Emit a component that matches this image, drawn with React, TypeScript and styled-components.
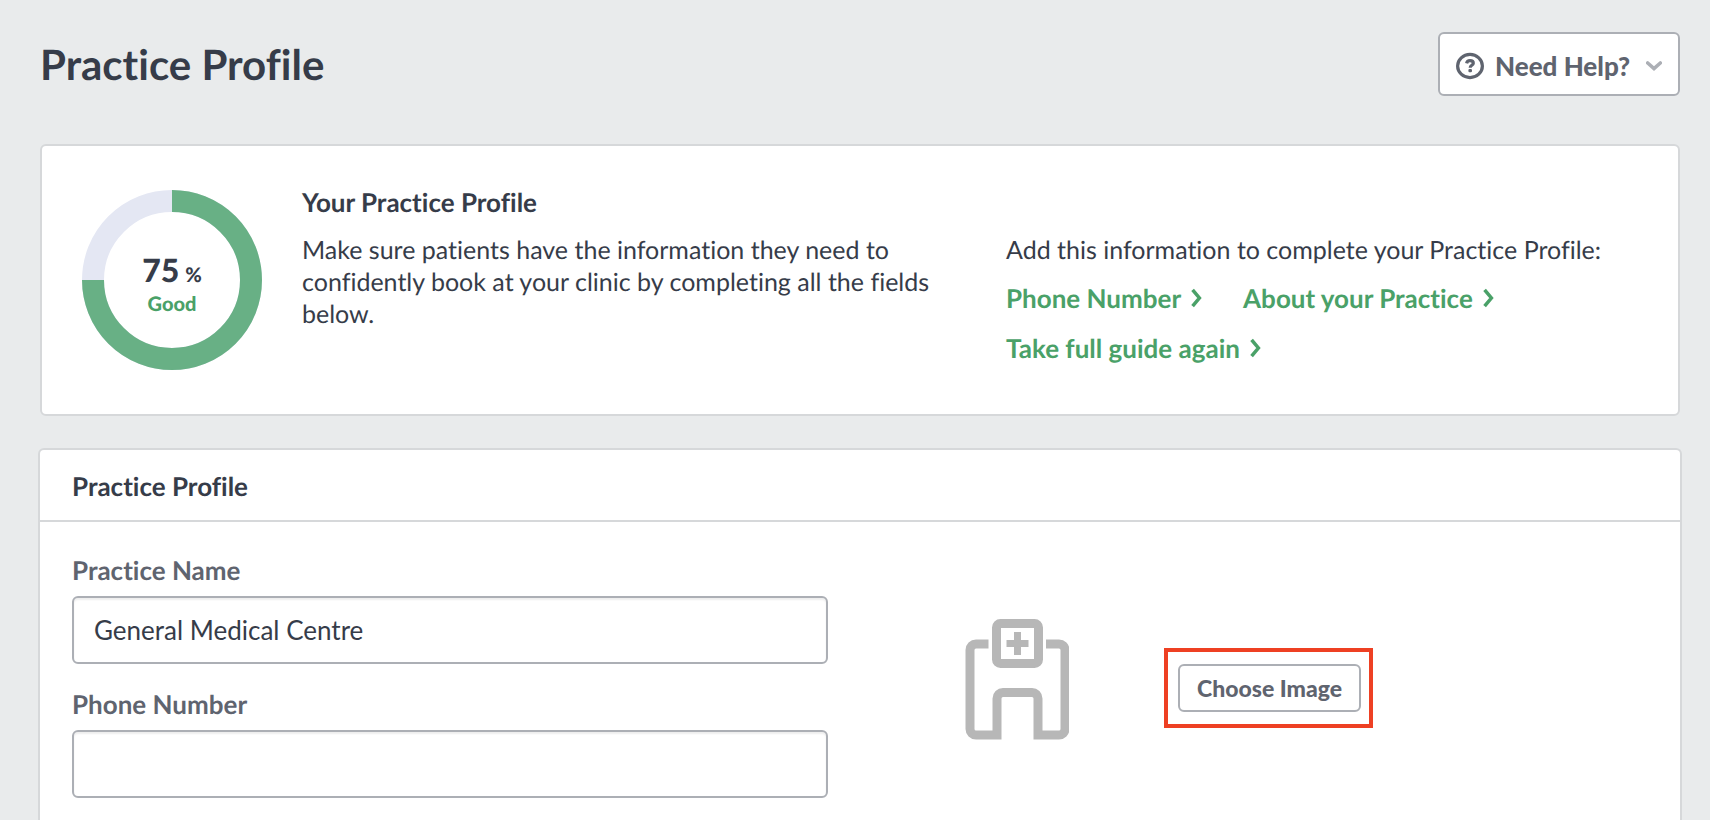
import React from "react";
import styled, { createGlobalStyle } from "styled-components";

const ink = "#363c49";
const slate = "#5f646f";
const green = "#4aa168";
const outline = "#acafb5";
const hairline = "#d6d8da";

const GlobalStyle = createGlobalStyle`
  *, *::before, *::after { box-sizing: border-box; }
  body {
    margin: 0;
    background: #e9ebec;
    color: ${ink};
    font-family: Lato, "Open Sans", sans-serif;
    font-size: 26px;
    line-height: 32px;
    font-variant-ligatures: none;
    text-rendering: geometricPrecision;
  }
  h1, h2, h3, p { margin: 0; }
  button, input { font: inherit; color: inherit; }
`;

const Page = styled.main`
  display: flex;
  flex-direction: column;
  min-height: 100vh;
  padding: 32px 30px 0 40px;
`;

const PageHeader = styled.header`
  display: flex;
  align-items: center;
  justify-content: space-between;
  height: 64px;
  margin-bottom: 48px;
`;

const PageTitle = styled.h1`
  font-size: 42px;
  line-height: 52px;
  font-weight: 700;
`;

const OutlineButton = styled.button<{ $small?: boolean }>`
  display: flex;
  align-items: center;
  justify-content: center;
  height: ${(p) => (p.$small ? "48px" : "64px")};
  padding: ${(p) => (p.$small ? "0 17px" : "3px 16px 0")};
  border: 2px solid ${outline};
  border-radius: 6px;
  background: #fff;
  color: ${slate};
  font-size: ${(p) => (p.$small ? "23px" : "26px")};
  font-weight: 900;
  white-space: nowrap;
  cursor: pointer;

  svg:first-child { margin-right: 11px; }
  svg:last-child { margin-left: 16px; }
`;

const Summary = styled.section`
  display: flex;
  gap: 40px;
  padding: 40px 32px 44px 40px;
  border: 2px solid ${hairline};
  border-radius: 6px;
  background: #fff;
`;

const Meter = styled.div`
  display: grid;
  flex: none;
  width: 180px;
  height: 180px;
  margin-top: 4px;

  > * { grid-area: 1 / 1; }
`;

const MeterText = styled.div`
  display: flex;
  flex-direction: column;
  align-items: center;
  justify-content: center;
  gap: 2px;
  padding-top: 14px;
`;

const Percent = styled.span`
  display: flex;
  align-items: baseline;
  gap: 6px;
  height: 32px;
  font-size: 32px;
  font-weight: 900;

  small { font-size: 20px; }
`;

const Rating = styled.span`
  color: ${green};
  font-size: 20px;
  font-weight: 900;
`;

const SummaryColumns = styled.div`
  display: grid;
  flex: 1;
  grid-template-columns: 1fr 1fr;
  gap: 16px 64px;
  align-content: start;
`;

const SectionTitle = styled.h2`
  font-size: 26px;
  line-height: 32px;
  font-weight: 700;
`;

const SummaryTitle = styled(SectionTitle)`
  grid-column: 1 / -1;
`;

const SummaryText = styled.p`
  font-size: 25px;
`;

const LinkList = styled.div`
  display: flex;
  flex-wrap: wrap;
  gap: 18px 40px;
  margin-top: 16px;
`;

const GuideLink = styled.a`
  display: inline-flex;
  align-items: center;
  gap: 9px;
  color: ${green};
  font-weight: 700;
  text-decoration: none;
`;

const Panel = styled.section`
  flex: 1;
  margin: 32px -2px 0;
  border: 2px solid ${hairline};
  border-bottom: 0;
  border-radius: 6px 6px 0 0;
  background: #fff;
`;

const PanelHeader = styled.header`
  padding: 20px 32px 18px;
  border-bottom: 2px solid ${hairline};
`;

const PanelBody = styled.div`
  display: grid;
  grid-template-columns: 1fr 1fr;
  gap: 64px;
  padding: 32px 32px 16px;
`;

const Fields = styled.form`
  display: flex;
  flex-direction: column;
  gap: 24px;
`;

const Field = styled.div`
  display: flex;
  flex-direction: column;
  gap: 10px;
`;

const Label = styled.label`
  color: ${slate};
  font-weight: 700;
`;

const TextInput = styled.input`
  width: 100%;
  height: 68px;
  padding: 0 20px;
  border: 2px solid ${outline};
  border-radius: 6px;
  background: #fff;
  box-shadow: inset 0 2px 2px rgba(0, 0, 0, 0.07);
  outline: none;
`;

const ImagePicker = styled.div`
  display: flex;
  align-items: flex-start;
  gap: 22px;
`;

const ImagePreview = styled.div`
  display: flex;
  align-items: center;
  justify-content: center;
  width: 250px;
  height: 250px;
`;

const Highlight = styled.div`
  margin-top: 94px;
  padding: 12px 8px 12px 10px;
  border: 4px solid #ee4023;
`;

const HelpIcon = () => (
  <svg width="28" height="28" viewBox="0 0 28 28" fill="none" aria-hidden="true">
    <ellipse cx="14" cy="14" rx="12.4" ry="11.6" stroke={slate} strokeWidth="3.2" />
    <path d="M10.6 11.4c.4-1.900 1.700-2.700 3.400-2.700 2 0 3.300 1 3.300 2.600 0 2-3.100 2.100-3.100 4.400" stroke={slate} strokeWidth="3.200" />
    <rect x="12.400" y="17" width="3.600" height="3.200" rx="1.200" fill={slate} />
  </svg>
);

const ChevronDown = () => (
  <svg width="16" height="10" viewBox="0 0 16 10" fill="none" aria-hidden="true">
    <path d="M1.700 2 8 7.500 14.300 2" stroke={outline} strokeWidth="3.600" strokeLinecap="round" />
  </svg>
);

const ChevronRight = () => (
  <svg width="13" height="20" viewBox="0 0 13 20" fill="none" aria-hidden="true">
    <path d="M2.600 1.800 9.400 10 2.600 18.200" stroke={green} strokeWidth="3.500" />
  </svg>
);

const Ring = ({ value }: { value: number }) => (
  <svg width="180" height="180" viewBox="0 0 180 180" fill="none" aria-hidden="true">
    <circle cx="90" cy="90" r="79" stroke="#e4e7f3" strokeWidth="22" />
    <circle
      cx="90"
      cy="90"
      r="79"
      stroke="#68b085"
      strokeWidth="22"
      pathLength="100"
      strokeDasharray={`${value} 100`}
      transform="rotate(-90 90 90)"
    />
  </svg>
);

const HospitalIcon = () => (
  <svg width="104" height="122" viewBox="0 0 104 122" fill="none" stroke="#b7b7b7" strokeWidth="9" role="img" aria-label="Practice image">
    <rect x="31.500" y="5.500" width="42" height="40" rx="4" />
    <path d="M52.500 14v23M41.500 25.500h22" strokeWidth="7" />
    <path d="M23.500 26H11a6 6 0 0 0-6 6v79a6 6 0 0 0 6 6H32V80.500a6 6 0 0 1 6-6h29a6 6 0 0 1 6 6V117H94a6 6 0 0 0 6-6V32a6 6 0 0 0-6-6H81" />
  </svg>
);

const links = ["Phone Number", "About your Practice", "Take full guide again"];

export default function App() {
  return (
    <>
      <GlobalStyle />
      <Page>
        <PageHeader>
          <PageTitle>Practice Profile</PageTitle>
          <OutlineButton type="button">
            <HelpIcon />
            Need Help?
            <ChevronDown />
          </OutlineButton>
        </PageHeader>

        <Summary>
          <Meter>
            <Ring value={75} />
            <MeterText>
              <Percent>
                75 <small>%</small>
              </Percent>
              <Rating>Good</Rating>
            </MeterText>
          </Meter>
          <SummaryColumns>
            <SummaryTitle>Your Practice Profile</SummaryTitle>
            <SummaryText>
              Make sure patients have the information they need to confidently book at your clinic by
              completing all the fields below.
            </SummaryText>
            <div>
              <SummaryText>Add this information to complete your Practice Profile:</SummaryText>
              <LinkList>
                {links.map((text) => (
                  <GuideLink key={text} href="#">
                    {text}
                    <ChevronRight />
                  </GuideLink>
                ))}
              </LinkList>
            </div>
          </SummaryColumns>
        </Summary>

        <Panel>
          <PanelHeader>
            <SectionTitle>Practice Profile</SectionTitle>
          </PanelHeader>
          <PanelBody>
            <Fields>
              <Field>
                <Label htmlFor="practice-name">Practice Name</Label>
                <TextInput id="practice-name" type="text" defaultValue="General Medical Centre" />
              </Field>
              <Field>
                <Label htmlFor="phone-number">Phone Number</Label>
                <TextInput id="phone-number" type="tel" />
              </Field>
            </Fields>
            <ImagePicker>
              <ImagePreview>
                <HospitalIcon />
              </ImagePreview>
              <Highlight>
                <OutlineButton type="button" $small>
                  Choose Image
                </OutlineButton>
              </Highlight>
            </ImagePicker>
          </PanelBody>
        </Panel>
      </Page>
    </>
  );
}
